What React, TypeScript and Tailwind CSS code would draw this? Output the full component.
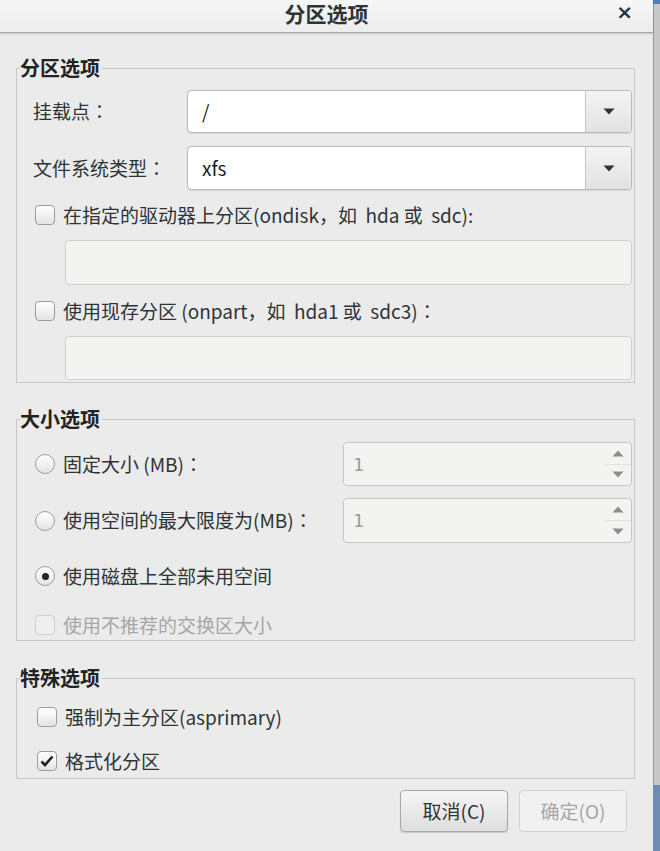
import { useState } from 'react'

const font = { fontFamily: '"Noto Sans CJK SC", "DejaVu Sans", sans-serif' }

// full-width colon drawn centred in its cell, as the GTK font does
const Colon = () => <span style={{ fontFamily: '"Noto Sans CJK TC", sans-serif' }}>：</span>

const Caret = ({ up = false, light = false }: { up?: boolean; light?: boolean }) => (
  <svg width="12" height="7" viewBox="0 0 12 7" className={up ? 'rotate-180' : ''}>
    <path d="M0.5 0.5h11L6 6.5z" fill={light ? '#8c8c8c' : '#2e3436'} />
  </svg>
)

const Combo = ({ value }: { value: string }) => (
  <div className="flex h-full flex-1 rounded-[4px] border border-[#b9b9b9] bg-white shadow-[0_1px_1px_rgba(0,0,0,0.08)]">
    <div className="flex flex-1 items-center pl-[14px] text-[19px] text-[#1c1c1c]">{value}</div>
    <div className="flex w-[46px] items-center justify-center rounded-r-[3px] border-l border-[#c4c4c4] bg-gradient-to-b from-[#f4f4f4] to-[#e2e2e2]">
      <Caret />
    </div>
  </div>
)

const Spin = () => (
  <div className="ml-auto flex h-full w-[289px] rounded-[4px] border border-[#c6c6c6] bg-[#f3f3f2]">
    <div className="flex flex-1 items-center pl-[9px] text-[18px] text-[#9a9a9a]" style={{ fontFamily: '"DejaVu Sans Mono", monospace' }}>
      1
    </div>
    <div className="flex w-[26px] flex-col">
      <div className="flex flex-1 items-center justify-center border-b border-[#e0e0e0]">
        <Caret up light />
      </div>
      <div className="flex flex-1 items-center justify-center">
        <Caret light />
      </div>
    </div>
  </div>
)

const Check = ({ checked = false, disabled = false }: { checked?: boolean; disabled?: boolean }) => (
  <div
    className={`flex h-[20px] w-[20px] shrink-0 items-center justify-center rounded-[4px] border ${
      disabled ? 'border-[#d0d0d0] bg-[#efefef]' : 'border-[#9c9c9c] bg-gradient-to-b from-[#ffffff] to-[#e4e4e4]'
    }`}
  >
    {checked && (
      <svg width="14" height="12" viewBox="0 0 14 12">
        <path d="M1.5 6.5l3.5 3.5 7.5-8.5" fill="none" stroke="#222" strokeWidth="2.6" />
      </svg>
    )}
  </div>
)

const Radio = ({ checked = false }: { checked?: boolean }) => (
  <div className="flex h-[20px] w-[20px] shrink-0 items-center justify-center rounded-full border border-[#9c9c9c] bg-gradient-to-b from-[#ffffff] to-[#e4e4e4]">
    {checked && <div className="h-[7px] w-[7px] rounded-full bg-[#222]" />}
  </div>
)

const Legend = ({ children }: { children: string }) => (
  <legend className="ml-[3px] pr-[2px] text-[20px] leading-[24px] font-bold text-[#222]">{children}</legend>
)

export default function App() {
  const [fmt, setFmt] = useState(true)
  return (
    <div className="flex h-[851px] w-[660px] overflow-hidden bg-[#c5c5c5]" style={font}>
      <div className="flex w-[653px] shrink-0 flex-col bg-[#ebebeb] text-[#2e3436] shadow-[1px_0_2px_rgba(0,0,0,0.3)]">
        {/* Title bar */}
        <div className="relative flex h-[33px] shrink-0 items-start justify-center border-b border-[#a9a9a9] bg-gradient-to-b from-[#f6f6f6] to-[#ededed] shadow-[0_1px_2px_rgba(0,0,0,0.15)]">
          <span className="text-[21px] leading-[26px] font-bold text-[#2e3436]">分区选项</span>
          <span className="absolute top-[1px] right-[20px] text-[20px] leading-[22px] font-bold text-[#2e3436]" style={{ fontFamily: '"DejaVu Sans", sans-serif' }}>
            ×
          </span>
        </div>

        {/* 分区选项 */}
        <fieldset className="mt-[23px] ml-[16px] mr-[18px] border border-[#c8c8c8] pr-[2px] pb-[2px]">
          <Legend>分区选项</Legend>
          <div className="mt-[10px] flex h-[43px] items-center">
            <span className="w-[170px] pl-[16px] text-[19px]">
              挂载点<Colon />
            </span>
            <Combo value="/" />
          </div>
          <div className="mt-[13px] flex h-[44px] items-center">
            <span className="w-[170px] pl-[16px] text-[19px]">
              文件系统类型<Colon />
            </span>
            <Combo value="xfs" />
          </div>
          <div className="mt-[13px] flex h-[24px] items-center gap-[8px] pl-[18px] text-[19px]">
            <Check />
            <span className="whitespace-pre">在指定的驱动器上分区(ondisk，如  hda 或  sdc):</span>
          </div>
          <div className="mt-[13px] ml-[48px] h-[45px] rounded-[4px] border border-[#cfcfcf] bg-[#f3f3f2]" />
          <div className="mt-[14px] flex h-[24px] items-center gap-[8px] pl-[18px] text-[19px]">
            <Check />
            <span className="whitespace-pre">
              使用现存分区 (onpart，如  hda1 或  sdc3)<Colon />
            </span>
          </div>
          <div className="mt-[13px] ml-[48px] h-[44px] rounded-[4px] border border-[#cfcfcf] bg-[#f3f3f2]" />
        </fieldset>

        {/* 大小选项 */}
        <fieldset className="mt-[24px] ml-[16px] mr-[18px] border border-[#c8c8c8] pr-[2px] pb-[3px]">
          <Legend>大小选项</Legend>
          <div className="mt-[11px] flex h-[44px] items-center gap-[8px] pl-[18px] text-[19px]">
            <Radio />
            <span>
              固定大小 (MB)<Colon />
            </span>
            <Spin />
          </div>
          <div className="mt-[12px] flex h-[45px] items-center gap-[8px] pl-[18px] text-[19px]">
            <Radio />
            <span>
              使用空间的最大限度为(MB)<Colon />
            </span>
            <Spin />
          </div>
          <div className="mt-[21px] flex h-[24px] items-center gap-[8px] pl-[18px] text-[19px]">
            <Radio checked />
            <span>使用磁盘上全部未用空间</span>
          </div>
          <div className="mt-[25px] flex h-[24px] items-center gap-[8px] pl-[18px] text-[19px] text-[#a6a6a6]">
            <Check disabled />
            <span>使用不推荐的交换区大小</span>
          </div>
        </fieldset>

        {/* 特殊选项 */}
        <fieldset className="mt-[25px] ml-[16px] mr-[18px] border border-[#c8c8c8] pb-[5px]">
          <Legend>特殊选项</Legend>
          <div className="mt-[15px] flex h-[24px] items-center gap-[8px] pl-[20px] text-[19px]">
            <Check />
            <span>强制为主分区(asprimary)</span>
          </div>
          <div className="mt-[20px] flex h-[24px] items-center gap-[8px] pl-[20px] text-[19px]" onClick={() => setFmt(!fmt)}>
            <Check checked={fmt} />
            <span>格式化分区</span>
          </div>
        </fieldset>

        {/* Buttons */}
        <div className="mt-[11px] mr-[26px] flex justify-end gap-[11px]">
          <button className="h-[42px] w-[108px] rounded-[4px] border border-[#a8a8a8] bg-gradient-to-b from-[#f6f6f6] to-[#dedede] text-[19px] text-[#2e3436] shadow-[0_1px_1px_rgba(0,0,0,0.15)]">
            取消(C)
          </button>
          <button className="h-[42px] w-[108px] rounded-[4px] border border-[#d2d2d2] bg-[#f1f1f1] text-[19px] text-[#a6a6a6]">
            确定(O)
          </button>
        </div>
      </div>
      <div className="flex flex-1 flex-col">
        <div className="h-[4px] bg-[#4a7fc0]" />
        <div className="flex-1 border-l border-[#9a9a9a] bg-[#c8c8c8]" />
        <div className="h-[66px] bg-[#6f8db3]" />
      </div>
    </div>
  )
}
